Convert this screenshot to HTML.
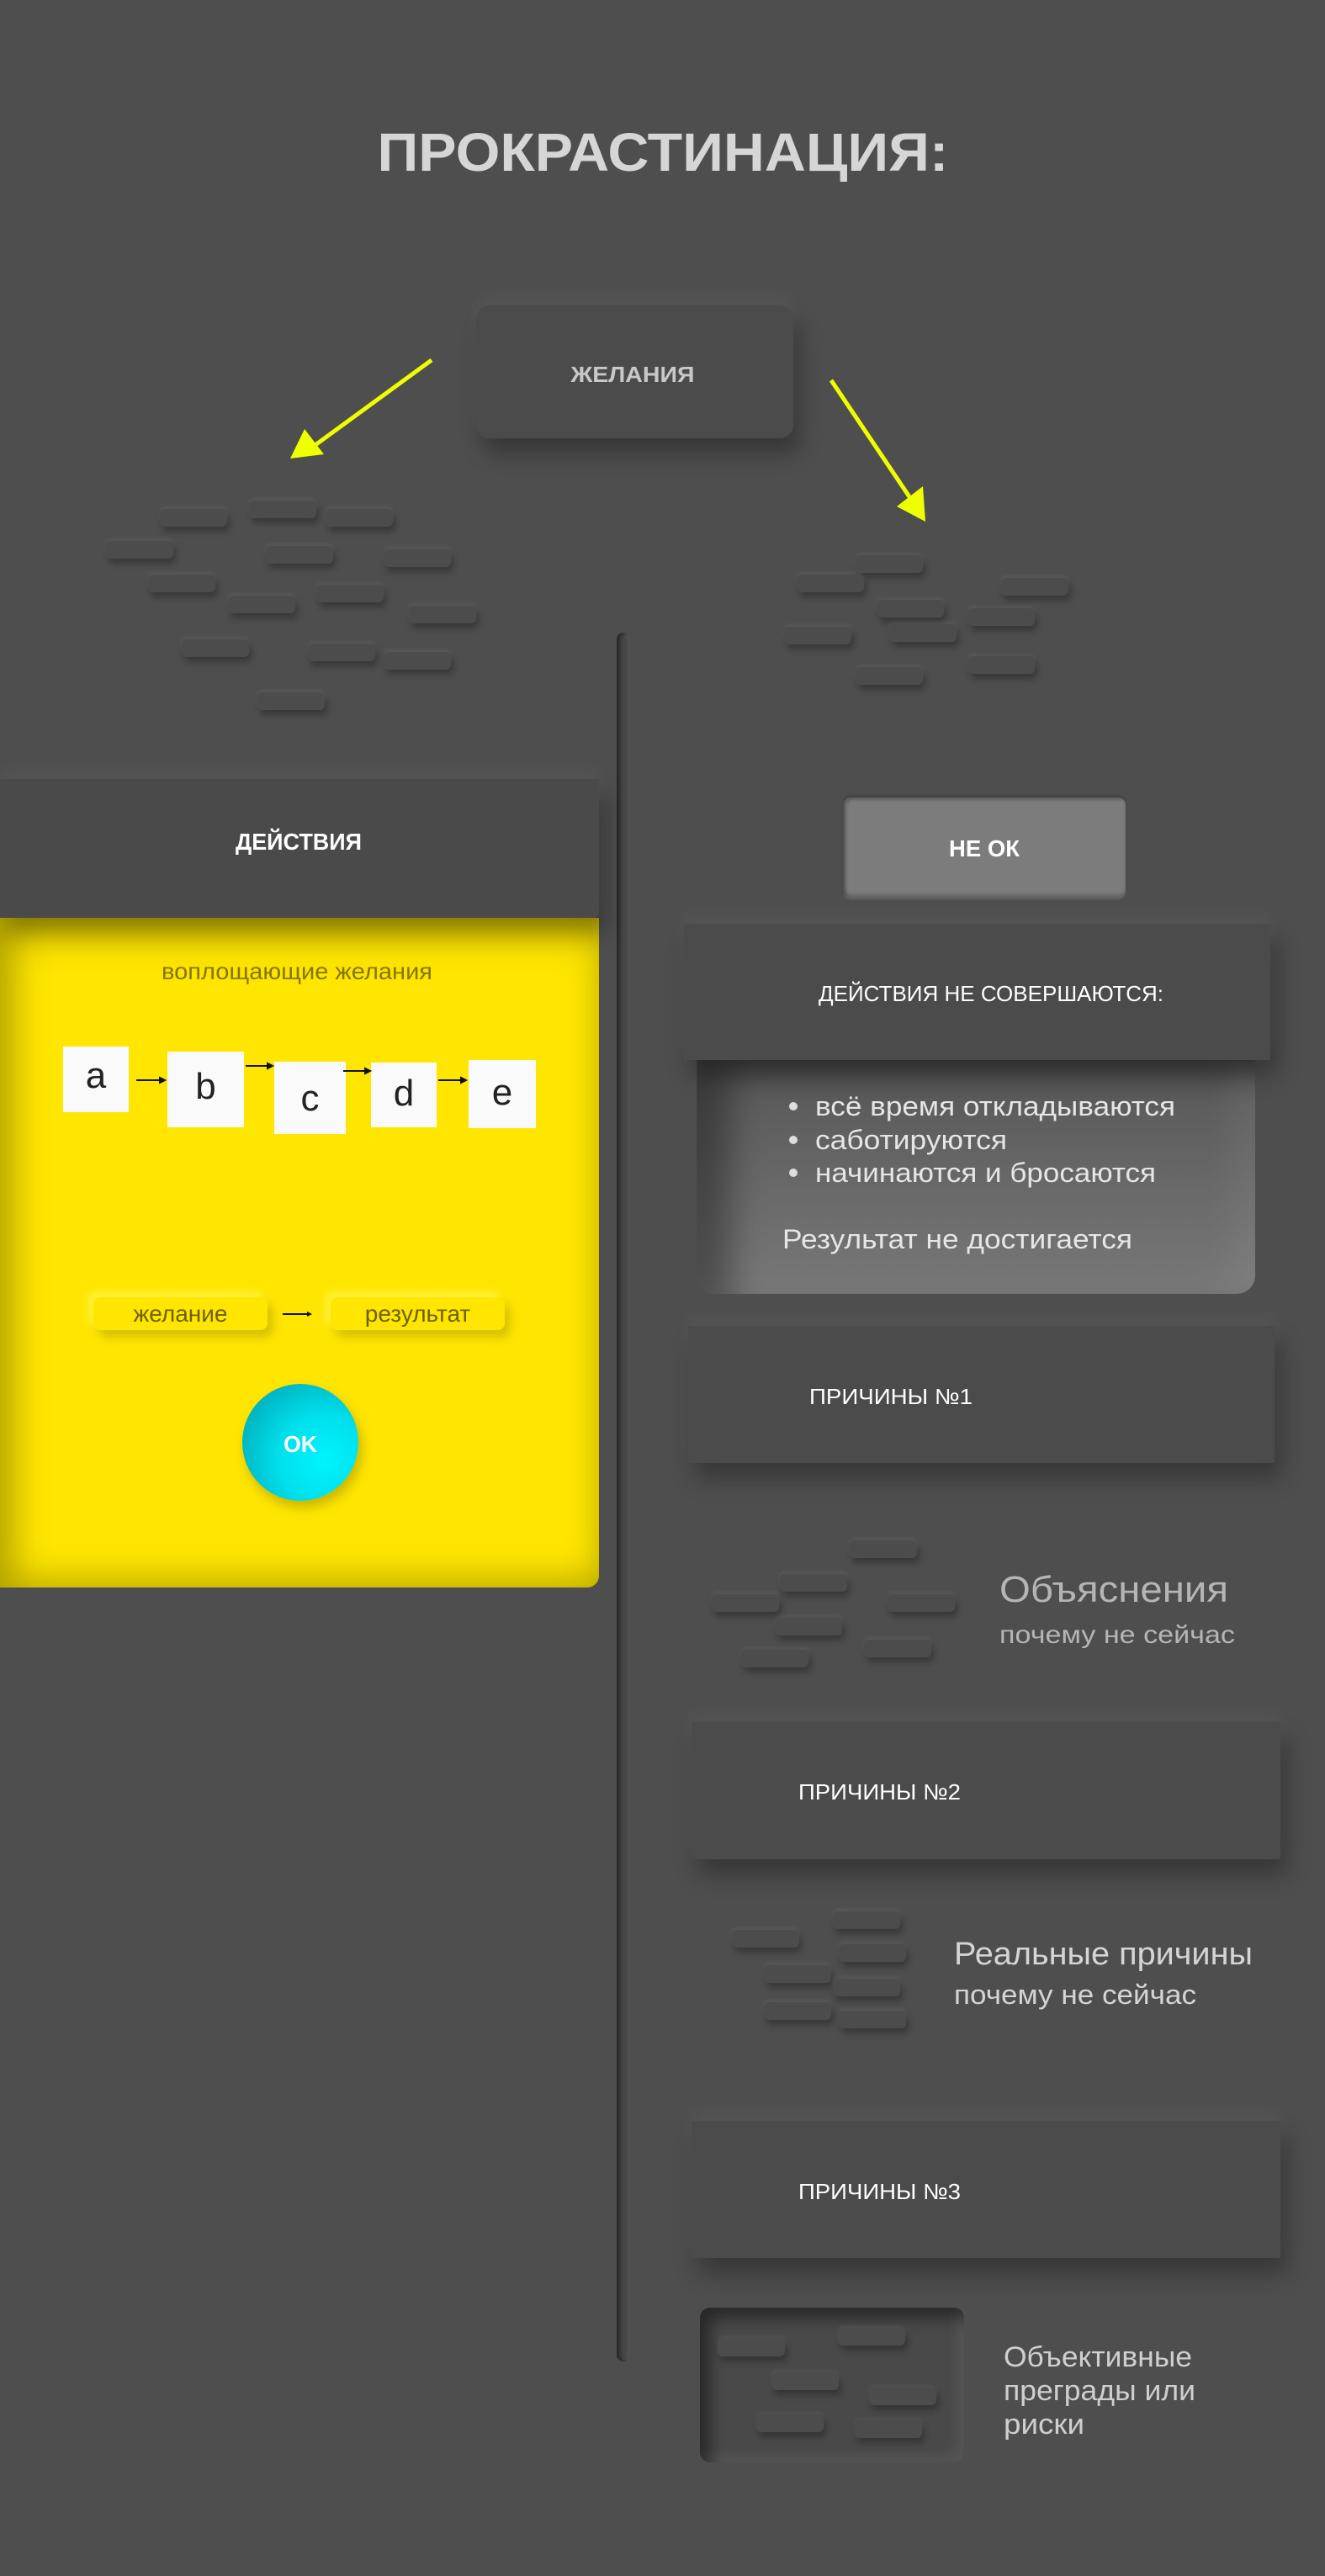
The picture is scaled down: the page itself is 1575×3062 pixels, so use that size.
<!DOCTYPE html>
<html><head><meta charset="utf-8">
<style>
*{margin:0;padding:0;box-sizing:border-box}
body{width:1575px;height:3062px;background:#4e4e4e;position:relative;overflow:hidden;font-family:"Liberation Sans","Noto Sans CJK SC",sans-serif}
.a{position:absolute}
.br{position:absolute;width:80px;height:21px;border-radius:6px;background:#4c4c4c;box-shadow:0 -3px 4px rgba(255,255,255,0.06),3px 6px 8px rgba(0,0,0,0.28)}
.card{position:absolute;background:#4b4b4b;box-shadow:0 -10px 18px rgba(255,255,255,0.05),8px 18px 26px rgba(0,0,0,0.3)}
svg text{font-family:"Liberation Sans Narrow","Liberation Sans",sans-serif}
.box{position:absolute;background:#fafafa;font-size:44px;color:#222;text-align:center;font-family:"Liberation Sans",sans-serif}
.pill{position:absolute;height:39px;border-radius:8px;background:#ffe600;box-shadow:-6px -6px 10px rgba(255,255,120,0.5),6px 8px 12px rgba(160,140,0,0.45);color:#6d6100;font-size:28px;text-align:center;line-height:39px;font-family:"Liberation Sans Narrow","Liberation Sans",sans-serif}
</style></head><body>

<svg class="a" style="left:0;top:0" width="1575" height="260">
<text x="788" y="203" text-anchor="middle" font-size="64" font-weight="bold" fill="#d6d6d6" textLength="679" lengthAdjust="spacingAndGlyphs">ПРОКРАСТИНАЦИЯ:</text>
</svg>

<div class="card" style="left:566px;top:363px;width:377px;height:158px;border-radius:16px;"></div>
<svg class="a" style="left:566px;top:363px" width="377" height="158"><text x="186" y="91" text-anchor="middle" font-size="26" font-weight="bold" fill="#c8c8c8" textLength="147" lengthAdjust="spacingAndGlyphs">ЖЕЛАНИЯ</text></svg>

<svg class="a" style="left:0;top:0" width="1575" height="700">
<line x1="513" y1="428" x2="372" y2="531" stroke="#eeff00" stroke-width="5"/>
<polygon points="345,545 362,510 385,540" fill="#eeff00"/>
<line x1="988" y1="452" x2="1086" y2="598" stroke="#eeff00" stroke-width="5"/>
<polygon points="1100,620 1066,602 1097,578" fill="#eeff00"/>
</svg>

<div class="br" style="left:190px;top:605px"></div>
<div class="br" style="left:296px;top:595px"></div>
<div class="br" style="left:387px;top:605px"></div>
<div class="br" style="left:126px;top:643px"></div>
<div class="br" style="left:316px;top:649px"></div>
<div class="br" style="left:456px;top:653px"></div>
<div class="br" style="left:176px;top:683px"></div>
<div class="br" style="left:376px;top:695px"></div>
<div class="br" style="left:271px;top:708px"></div>
<div class="br" style="left:486px;top:720px"></div>
<div class="br" style="left:216px;top:760px"></div>
<div class="br" style="left:366px;top:765px"></div>
<div class="br" style="left:456px;top:775px"></div>
<div class="br" style="left:306px;top:823px"></div>
<div class="br" style="left:1017px;top:660px"></div>
<div class="br" style="left:947px;top:683px"></div>
<div class="br" style="left:1190px;top:687px"></div>
<div class="br" style="left:1042px;top:713px"></div>
<div class="br" style="left:1150px;top:723px"></div>
<div class="br" style="left:932px;top:745px"></div>
<div class="br" style="left:1057px;top:742px"></div>
<div class="br" style="left:1150px;top:780px"></div>
<div class="br" style="left:1017px;top:793px"></div>

<div class="a" style="left:733px;top:752px;width:16px;height:2055px;border-radius:8px;background:#474747;box-shadow:inset 4px 0 5px rgba(0,0,0,0.45),inset -3px 0 4px rgba(255,255,255,0.08)"></div>

<div class="a" style="left:0;top:1091px;width:712px;height:796px;border-radius:0 0 14px 0;background:#ffe600;box-shadow:inset 24px 0 36px rgba(120,110,0,0.3),inset 0 -20px 34px rgba(150,140,0,0.3),inset 0 30px 40px rgba(130,120,0,0.3)"></div>
<div class="card" style="left:0;top:926px;width:712px;height:165px;border-radius:0 0 6px 0;background:#4a4a4a"></div>
<svg class="a" style="left:0;top:926px" width="712" height="165"><text x="355" y="84" text-anchor="middle" font-size="28" font-weight="bold" fill="#fff" textLength="150" lengthAdjust="spacingAndGlyphs">ДЕЙСТВИЯ</text></svg>
<svg class="a" style="left:0;top:1130px" width="712" height="50"><text x="353" y="34" text-anchor="middle" font-size="28" fill="#857500" textLength="322" lengthAdjust="spacingAndGlyphs">воплощающие желания</text></svg>

<div class="box" style="left:75px;top:1244px;width:78px;height:78px;line-height:70px">a</div>
<div class="box" style="left:199px;top:1250px;width:91px;height:90px;line-height:84px">b</div>
<div class="box" style="left:326px;top:1262px;width:85px;height:86px;line-height:88px">c</div>
<div class="box" style="left:441px;top:1263px;width:78px;height:77px;line-height:74px">d</div>
<div class="box" style="left:557px;top:1260px;width:80px;height:81px;line-height:78px">e</div>
<svg class="a" style="left:0;top:1240px" width="712" height="80">
<g stroke="#111" stroke-width="2" fill="#111">
<line x1="162" y1="44" x2="192" y2="44"/><polygon points="196,44 190,41 190,47"/>
<line x1="292" y1="27" x2="320" y2="27"/><polygon points="324,27 318,24 318,30"/>
<line x1="408" y1="33" x2="436" y2="33"/><polygon points="440,33 434,30 434,36"/>
<line x1="521" y1="44" x2="550" y2="44"/><polygon points="554,44 548,41 548,47"/>
</g></svg>
<div class="pill" style="left:111px;top:1542px;width:207px">желание</div>
<div class="pill" style="left:393px;top:1542px;width:207px">результат</div>
<svg class="a" style="left:330px;top:1552px" width="50" height="20"><line x1="6" y1="10" x2="36" y2="10" stroke="#111" stroke-width="2"/><polygon points="41,10 35,7 35,13" fill="#111"/></svg>
<div class="a" style="left:288px;top:1645px;width:138px;height:139px;border-radius:50%;background:radial-gradient(circle at 70% 65%,#00f4ff 0%,#00e0ec 40%,#009aa8 100%);box-shadow:4px 8px 14px rgba(120,110,0,0.4)"></div>
<svg class="a" style="left:288px;top:1645px" width="138" height="139"><text x="69" y="81" text-anchor="middle" font-size="28" font-weight="bold" fill="#fff" textLength="40" lengthAdjust="spacingAndGlyphs">OK</text></svg>

<div class="a" style="left:1003px;top:948px;width:335px;height:119px;border-radius:8px;background:#7c7c7c;box-shadow:inset 0 -4px 3px rgba(0,0,0,0.18),inset 3px 3px 3px rgba(0,0,0,0.22),0 2px 2px rgba(255,255,255,0.12),0 -2px 3px rgba(0,0,0,0.2)"></div>
<svg class="a" style="left:1003px;top:948px" width="335" height="119"><text x="167" y="70" text-anchor="middle" font-size="28" font-weight="bold" fill="#fff" textLength="84" lengthAdjust="spacingAndGlyphs">НЕ ОК</text></svg>

<div class="a" style="left:828px;top:1250px;width:664px;height:288px;border-radius:0 0 22px 22px;background:linear-gradient(180deg,#555 0%,#6a6a6a 60%,#787878 100%);box-shadow:inset 40px 20px 40px rgba(0,0,0,0.35),inset -30px 0 40px rgba(255,255,255,0.06)"></div>
<div class="card" style="left:813px;top:1098px;width:697px;height:162px;"></div>
<svg class="a" style="left:813px;top:1098px" width="697" height="162"><text x="365" y="92" text-anchor="middle" font-size="26" fill="#fff" textLength="410" lengthAdjust="spacingAndGlyphs">ДЕЙСТВИЯ НЕ СОВЕРШАЮТСЯ:</text></svg>
<svg class="a" style="left:900px;top:1280px" width="600" height="220" font-size="32" fill="#e6e6e6">
<circle cx="43" cy="35" r="5" fill="#ddd"/><circle cx="43" cy="75" r="5" fill="#ddd"/><circle cx="43" cy="114" r="5" fill="#ddd"/>
<text x="69" y="46" textLength="428" lengthAdjust="spacingAndGlyphs">всё время откладываются</text>
<text x="69" y="86" textLength="228" lengthAdjust="spacingAndGlyphs">саботируются</text>
<text x="69" y="125" textLength="405" lengthAdjust="spacingAndGlyphs">начинаются и бросаются</text>
<text x="30" y="204" textLength="416" lengthAdjust="spacingAndGlyphs">Результат не достигается</text>
</svg>

<div class="card" style="left:818px;top:1576px;width:697px;height:163px;"></div>
<svg class="a" style="left:818px;top:1576px" width="697" height="163"><text x="144" y="93" font-size="26" fill="#fff" textLength="194" lengthAdjust="spacingAndGlyphs">ПРИЧИНЫ №1</text></svg>

<div class="br" style="left:1010px;top:1831px"></div>
<div class="br" style="left:927px;top:1871px"></div>
<div class="br" style="left:846px;top:1895px"></div>
<div class="br" style="left:1055px;top:1895px"></div>
<div class="br" style="left:921px;top:1923px"></div>
<div class="br" style="left:1027px;top:1949px"></div>
<div class="br" style="left:881px;top:1961px"></div>
<svg class="a" style="left:1180px;top:1850px" width="380" height="120" fill="#b5b5b5">
<text x="8" y="54" font-size="44" textLength="272" lengthAdjust="spacingAndGlyphs">Объяснения</text>
<text x="8" y="103" font-size="30" textLength="280" lengthAdjust="spacingAndGlyphs">почему не сейчас</text>
</svg>

<div class="card" style="left:822px;top:2047px;width:700px;height:163px;"></div>
<svg class="a" style="left:822px;top:2047px" width="700" height="163"><text x="127" y="92" font-size="26" fill="#fff" textLength="193" lengthAdjust="spacingAndGlyphs">ПРИЧИНЫ №2</text></svg>

<div class="br" style="left:990px;top:2272px"></div>
<div class="br" style="left:870px;top:2294px"></div>
<div class="br" style="left:997px;top:2311px"></div>
<div class="br" style="left:908px;top:2336px"></div>
<div class="br" style="left:990px;top:2352px"></div>
<div class="br" style="left:908px;top:2380px"></div>
<div class="br" style="left:997px;top:2390px"></div>
<svg class="a" style="left:1130px;top:2280px" width="420" height="120" fill="#d5d5d5">
<text x="4" y="55" font-size="38" textLength="355" lengthAdjust="spacingAndGlyphs">Реальные причины</text>
<text x="4" y="102" font-size="32" textLength="288" lengthAdjust="spacingAndGlyphs">почему не сейчас</text>
</svg>

<div class="card" style="left:822px;top:2521px;width:700px;height:163px;"></div>
<svg class="a" style="left:822px;top:2521px" width="700" height="163"><text x="127" y="93" font-size="26" fill="#fff" textLength="193" lengthAdjust="spacingAndGlyphs">ПРИЧИНЫ №3</text></svg>

<div class="a" style="left:832px;top:2743px;width:314px;height:184px;border-radius:12px;background:#494949;box-shadow:inset 12px 12px 18px rgba(0,0,0,0.45),inset -8px -8px 14px rgba(255,255,255,0.08)"></div>
<div class="br" style="left:853px;top:2780px"></div>
<div class="br" style="left:996px;top:2767px"></div>
<div class="br" style="left:917px;top:2820px"></div>
<div class="br" style="left:1033px;top:2838px"></div>
<div class="br" style="left:899px;top:2870px"></div>
<div class="br" style="left:1016px;top:2877px"></div>
<svg class="a" style="left:1185px;top:2780px" width="360" height="130" fill="#cfcfcf" font-size="34">
<text x="8" y="33" textLength="224" lengthAdjust="spacingAndGlyphs">Объективные</text>
<text x="8" y="73" textLength="228" lengthAdjust="spacingAndGlyphs">преграды или</text>
<text x="8" y="113" textLength="96" lengthAdjust="spacingAndGlyphs">риски</text>
</svg>

</body></html>
